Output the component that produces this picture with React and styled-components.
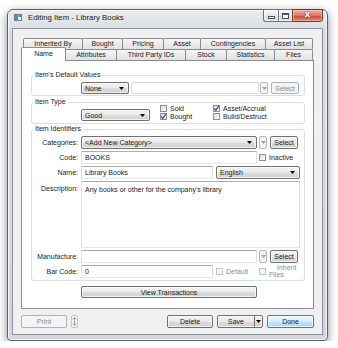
import React from "react";
import styled, { createGlobalStyle } from "styled-components";

const GlobalStyle = createGlobalStyle`
  html, body {
    margin: 0;
    background: #fff;
  }
  body {
    font-family: "Liberation Sans", Arial, sans-serif;
    font-size: 7px;
    color: #1a1a1a;
  }
  * {
    box-sizing: border-box;
  }
`;

const ROW1 = [
  ["Inherited By", 60],
  ["Bought", 41],
  ["Pricing", 42],
  ["Asset", 38],
  ["Contingencies", 66],
  ["Asset List", 48],
];

const ROW2 = [
  ["Name", 45, true],
  ["Attributes", 52],
  ["Third Party IDs", 70],
  ["Stock", 42],
  ["Statistics", 49],
  ["Files", 39],
];

const buttonFace = "linear-gradient(#f2f2f2, #ebebeb 48%, #dddddd 52%, #cfcfcf)";

const Window = styled.div`
  margin: 9px 0 0 7px;
  width: 321px;
  height: 332px;
  border: 1px solid #5c6168;
  border-radius: 6px 6px 4px 4px;
  background: linear-gradient(#eaedf0, #d8dce0 22px, #d3d7dc);
  box-shadow: 0 3px 10px rgba(0, 0, 0, 0.45), inset 0 0 0 1px rgba(255, 255, 255, 0.75);
  padding: 0 4px 5px 4px;
  display: flex;
  flex-direction: column;
`;

const TitleBar = styled.div`
  height: 18px;
  display: flex;
  align-items: flex-start;
  flex-shrink: 0;
`;

const AppIcon = styled.div`
  margin: 4px 0 0 2px;
  display: flex;
`;

const Title = styled.div`
  margin-left: 6px;
  line-height: 16px;
  font-size: 7.8px;
  color: #1a1a1a;
`;

const Controls = styled.div`
  margin-left: auto;
  margin-top: -1px;
  display: flex;
`;

const CtrlButton = styled.div`
  width: ${(p) => p.$w}px;
  height: 13px;
  border: 1px solid #6a737d;
  border-right: none;
  background: linear-gradient(#f6f7f9, #e3e7eb 50%, #d3d8de 51%, #e0e4e8);
  box-shadow: inset 0 0 0 1px rgba(255, 255, 255, 0.6);
  display: flex;
  align-items: center;
  justify-content: center;
  &:first-child {
    border-radius: 0 0 0 3px;
  }
`;

const MinGlyph = styled.div`
  width: 7px;
  height: 3px;
  margin-top: 4px;
  background: #fff;
  border: 1px solid #4a5460;
`;

const MaxGlyph = styled.div`
  width: 7px;
  height: 6px;
  border: 1px solid #4a5460;
  border-top-width: 2px;
  background: #fff;
`;

const CloseButton = styled.div`
  width: 31px;
  height: 13px;
  border: 1px solid #7a3028;
  border-radius: 0 0 3px 0;
  background: linear-gradient(#eeb0a3, #dc7868 50%, #c9493a 51%, #dc8470);
  box-shadow: inset 0 0 0 1px rgba(255, 215, 205, 0.5);
  display: flex;
  align-items: center;
  justify-content: center;
`;

const CloseGlyph = styled.span`
  font-family: "DejaVu Sans", sans-serif;
  font-weight: bold;
  font-size: 9px;
  line-height: 9px;
  margin-top: -2px;
  color: #fff;
  text-shadow: 0 0 1px #5a1d17, 0 0 1px #5a1d17;
`;

const Client = styled.div`
  flex: 1;
  background: #f0f0f0;
  border: 1px solid #8b9199;
  padding: 9px 8px 0 8px;
  display: flex;
  flex-direction: column;
`;

const TabRow = styled.div`
  height: 11px;
  display: flex;
  padding-left: ${(p) => p.$indent}px;
  flex-shrink: 0;
`;

const Tab = styled.div`
  position: relative;
  width: ${(p) => p.$w}px;
  height: ${(p) => (p.$active ? 14 : 11)}px;
  margin-top: ${(p) => (p.$active ? -2 : 0)}px;
  margin-bottom: ${(p) => (p.$active ? -1 : 0)}px;
  margin-right: -1px;
  z-index: ${(p) => (p.$active ? 2 : 1)};
  border: 1px solid #898c95;
  border-bottom: none;
  border-radius: 2px 2px 0 0;
  background: ${(p) => (p.$active ? "#fff" : "linear-gradient(#f7f7f7, #ebebeb 50%, #e1e1e1)")};
  display: flex;
  justify-content: center;
  padding-top: ${(p) => (p.$active ? 2 : 1)}px;
  line-height: 8px;
  font-size: 7px;
`;

const Panel = styled.div`
  height: 249px;
  flex-shrink: 0;
  background: #fff;
  border: 1px solid #898c95;
  padding: 10px 8px 0 9px;
  display: flex;
  flex-direction: column;
`;

const Group = styled.fieldset`
  margin: ${(p) => p.$mt || 0}px 0 0 0;
  padding: ${(p) => p.$pt}px 6px ${(p) => p.$pb}px 0;
  border: 1px solid #d5dfe5;
  border-radius: 3px;
  min-width: 0;
`;

const Legend = styled.legend`
  margin-left: 1px;
  padding: 0 2px;
  line-height: 8px;
  font-size: 7px;
`;

const Rows = styled.div`
  display: flex;
  flex-direction: column;
  gap: 2px;
`;

const Row = styled.div`
  height: ${(p) => p.$h}px;
  display: flex;
  align-items: ${(p) => (p.$top ? "flex-start" : "center")};
`;

const TypeRow = styled.div`
  margin-top: -2px;
  height: 17px;
  display: flex;
  align-items: flex-end;
`;

const Label = styled.div`
  width: 46px;
  margin-right: 3px;
  flex-shrink: 0;
  text-align: right;
  padding-top: ${(p) => p.$pt || 0}px;
  font-size: 7px;
`;

const Combo = styled.div`
  width: ${(p) => p.$w}px;
  height: ${(p) => p.$h || 13}px;
  margin-left: ${(p) => p.$ml || 0}px;
  flex-shrink: 0;
  border: 1px solid #707070;
  border-radius: 2px;
  background: ${buttonFace};
  box-shadow: inset 0 0 0 1px rgba(255, 255, 255, 0.7);
  display: flex;
  align-items: center;
  justify-content: space-between;
  padding: 0 4px 0 3px;
  font-size: 7px;
`;

const Input = styled.div`
  width: ${(p) => p.$w}px;
  height: 100%;
  margin-left: ${(p) => p.$ml || 0}px;
  flex-shrink: 0;
  border: 1px solid;
  border-color: ${(p) => (p.$disabled ? "#d5d8dd" : "#abadb3 #dbdfe6 #e3e9ef #e2e3ea")};
  border-radius: 1px;
  background: #fff;
  display: flex;
  align-items: center;
  padding-left: 3px;
  font-size: 7px;
`;

const TextArea = styled.div`
  width: 219px;
  height: 100%;
  flex-shrink: 0;
  border: 1px solid;
  border-color: #abadb3 #dbdfe6 #e3e9ef #e2e3ea;
  background: #fff;
  padding: 4px 3px;
  font-size: 7px;
  line-height: 8px;
`;

const DropButton = styled.div`
  width: 8px;
  height: 100%;
  margin-left: ${(p) => p.$ml || 0}px;
  flex-shrink: 0;
  border: 1px solid ${(p) => (p.$disabled ? "#b5b9bd" : "#707070")};
  border-radius: 2px;
  background: ${(p) => (p.$disabled ? "#f4f4f4" : buttonFace)};
  display: flex;
  align-items: center;
  justify-content: center;
`;

const Button = styled.div`
  width: ${(p) => p.$w}px;
  height: ${(p) => p.$h}px;
  margin-left: ${(p) => p.$ml || 0}px;
  margin-top: ${(p) => p.$mt || 0}px;
  flex-shrink: 0;
  border: 1px solid
    ${(p) => (p.$primary ? "#3c7fb1" : p.$disabled ? "#adb2b5" : "#707070")};
  border-radius: 2px;
  background: ${(p) =>
    p.$primary
      ? "linear-gradient(#eaf6fd, #d9f0fc 48%, #bee6fd 52%, #a7d9f5)"
      : p.$disabled
      ? "#f4f4f4"
      : buttonFace};
  box-shadow: inset 0 0 0 1px rgba(255, 255, 255, ${(p) => (p.$disabled ? 0 : 0.7)});
  color: ${(p) => (p.$disabled ? "#8a8a8a" : "#1a1a1a")};
  display: flex;
  align-items: center;
  justify-content: center;
  font-size: 7px;
`;

const CheckGrid = styled.div`
  margin-left: 10px;
  margin-bottom: 1px;
  display: grid;
  grid-template-columns: 53px auto;
  grid-auto-rows: 8px;
`;

const CheckItem = styled.div`
  width: ${(p) => (p.$w ? `${p.$w}px` : "auto")};
  margin-left: ${(p) => p.$ml || 0}px;
  flex-shrink: 0;
  display: flex;
  align-items: center;
  gap: 3px;
  font-size: 7px;
  color: ${(p) => (p.$disabled ? "#8d8d8d" : "#1a1a1a")};
`;

const Box = styled.div`
  width: 7px;
  height: 7px;
  flex-shrink: 0;
  border: 1px solid ${(p) => (p.$disabled ? "#c2c4c6" : "#8e8f8f")};
  background: ${(p) =>
    p.$disabled ? "#f4f4f4" : "linear-gradient(135deg, #dcdcdc, #fbfbfb)"};
  display: flex;
  align-items: center;
  justify-content: center;
  & svg {
    margin: -1px;
  }
`;

const TwoLine = styled.div`
  display: flex;
  flex-direction: column;
  line-height: 7px;
  margin-top: -1px;
  & span:first-child {
    padding-left: 8px;
  }
`;

const BottomBar = styled.div`
  margin-top: 6px;
  display: flex;
  align-items: center;
  gap: 4px;
`;

const Spinner = styled.div`
  width: 7px;
  height: 13px;
  border: 1px solid #c4c7ca;
  border-radius: 2px;
  background: #f6f6f6;
  display: flex;
  align-items: center;
  justify-content: center;
`;

const Spacer = styled.div`
  flex: 1;
`;

const SplitButton = styled.div`
  width: 46px;
  height: 13px;
  border: 1px solid #707070;
  border-radius: 2px;
  background: ${buttonFace};
  box-shadow: inset 0 0 0 1px rgba(255, 255, 255, 0.7);
  display: flex;
`;

const SplitMain = styled.div`
  flex: 1;
  display: flex;
  align-items: center;
  justify-content: center;
  font-size: 7px;
`;

const SplitArrow = styled.div`
  width: 8px;
  border-left: 1px solid #707070;
  display: flex;
  align-items: center;
  justify-content: center;
`;

const Arrow = ({ color = "#000" }) => (
  <svg width="5" height="3" viewBox="0 0 5 3">
    <polygon points="0,0 5,0 2.5,3" fill={color} />
  </svg>
);

const Check = () => (
  <svg width="7" height="7" viewBox="0 0 7 7">
    <path d="M1.2 3.4 L2.8 5.4 L5.8 0.9" stroke="#35508a" strokeWidth="1.2" fill="none" />
  </svg>
);

const CheckBox = ({ checked, disabled, children, ...rest }) => (
  <CheckItem $disabled={disabled} {...rest}>
    <Box $disabled={disabled}>{checked && <Check />}</Box>
    {children}
  </CheckItem>
);

const Dropdown = ({ children, ...rest }) => (
  <Combo {...rest}>
    {children}
    <Arrow />
  </Combo>
);

const App = () => {
  return (
    <>
      <GlobalStyle />
      <Window>
        <TitleBar>
          <AppIcon>
            <svg width="8" height="7" viewBox="0 0 8 7">
              <rect x="0.5" y="0.5" width="7" height="6" fill="#e8eef4" stroke="#6f7f8f" />
              <rect x="1" y="1" width="3" height="5" fill="#3f9f6f" />
              <rect x="4.5" y="1" width="2.5" height="2" fill="#4f7fc8" />
            </svg>
          </AppIcon>
          <Title>Editing Item - Library Books</Title>
          <Controls>
            <CtrlButton $w={15}>
              <MinGlyph />
            </CtrlButton>
            <CtrlButton $w={14}>
              <MaxGlyph />
            </CtrlButton>
            <CloseButton>
              <CloseGlyph>x</CloseGlyph>
            </CloseButton>
          </Controls>
        </TitleBar>

        <Client>
          <TabRow $indent={2}>
            {ROW1.map(([t, w]) => (
              <Tab key={t} $w={w}>
                {t}
              </Tab>
            ))}
          </TabRow>
          <TabRow $indent={0}>
            {ROW2.map(([t, w, active]) => (
              <Tab key={t} $w={w} $active={active}>
                {t}
              </Tab>
            ))}
          </TabRow>

          <Panel>
            <Group $pt={3} $pb={1}>
              <Legend>Item's Default Values</Legend>
              <Row $h={12}>
                <Label />
                <Dropdown $w={48} $h={12}>
                  None
                </Dropdown>
                <Input $w={128} $ml={2} $disabled />
                <DropButton $ml={1} $disabled>
                  <Arrow color="#a0a0a0" />
                </DropButton>
                <Button $w={28} $h={12} $ml={3} $disabled>
                  Select
                </Button>
              </Row>
            </Group>

            <Group $mt={2} $pt={0} $pb={2}>
              <Legend>Item Type</Legend>
              <TypeRow>
                <Label />
                <Dropdown $w={69} $h={12}>
                  Good
                </Dropdown>
                <CheckGrid>
                  <CheckBox>Sold</CheckBox>
                  <CheckBox checked>Asset/Accrual</CheckBox>
                  <CheckBox checked>Bought</CheckBox>
                  <CheckBox>Build/Destruct</CheckBox>
                </CheckGrid>
              </TypeRow>
            </Group>

            <Group $mt={1} $pt={3} $pb={2}>
              <Legend>Item Identifiers</Legend>
              <Rows>
                <Row $h={13}>
                  <Label>Categories:</Label>
                  <Dropdown $w={176}>&lt;Add New Category&gt;</Dropdown>
                  <DropButton $ml={2} $disabled>
                    <Arrow color="#a0a0a0" />
                  </DropButton>
                  <Button $w={28} $h={13} $ml={3}>
                    Select
                  </Button>
                </Row>
                <Row $h={13}>
                  <Label>Code:</Label>
                  <Input $w={176}>BOOKS</Input>
                  <CheckBox $ml={2}>Inactive</CheckBox>
                </Row>
                <Row $h={13}>
                  <Label>Name:</Label>
                  <Input $w={132}>Library Books</Input>
                  <Dropdown $w={84} $ml={3}>
                    English
                  </Dropdown>
                </Row>
                <Row $h={67} $top>
                  <Label $pt={4}>Description:</Label>
                  <TextArea>Any books or other for the company's library</TextArea>
                </Row>
                <Row $h={13}>
                  <Label>Manufacture:</Label>
                  <Input $w={176} />
                  <DropButton $ml={2} $disabled>
                    <Arrow color="#a0a0a0" />
                  </DropButton>
                  <Button $w={28} $h={13} $ml={3}>
                    Select
                  </Button>
                </Row>
                <Row $h={13}>
                  <Label>Bar Code:</Label>
                  <Input $w={132}>0</Input>
                  <CheckBox $ml={3} $w={43} disabled>
                    Default
                  </CheckBox>
                  <CheckBox disabled>
                    <TwoLine>
                      <span>Inherit</span>
                      <span>Files</span>
                    </TwoLine>
                  </CheckBox>
                </Row>
              </Rows>
            </Group>

            <Button $w={176} $h={12} $ml={50} $mt={5}>
              View Transactions
            </Button>
          </Panel>

          <BottomBar>
            <Button $w={46} $h={13} $disabled>
              Print
            </Button>
            <Spinner>
              <svg width="5" height="9" viewBox="0 0 5 9">
                <path
                  d="M2.5 0.5 V8.5 M0.5 2.5 L2.5 0.5 L4.5 2.5 M0.5 6.5 L2.5 8.5 L4.5 6.5"
                  stroke="#9a9a9a"
                  fill="none"
                  strokeWidth="0.9"
                />
              </svg>
            </Spinner>
            <Spacer />
            <Button $w={46} $h={13}>
              Delete
            </Button>
            <SplitButton>
              <SplitMain>Save</SplitMain>
              <SplitArrow>
                <Arrow />
              </SplitArrow>
            </SplitButton>
            <Button $w={47} $h={13} $primary>
              Done
            </Button>
          </BottomBar>
        </Client>
      </Window>
    </>
  );
};

export default App;
